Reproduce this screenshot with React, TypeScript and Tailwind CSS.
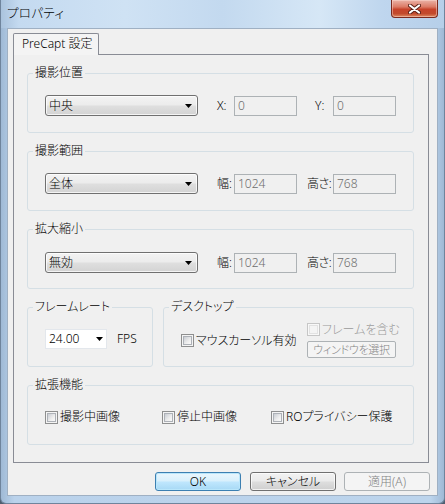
import React from "react";

function Arrow() {
  return (
    <svg width="7" height="4" viewBox="0 0 7 4" className="shrink-0">
      <path d="M0 0H7L3.5 4Z" fill="#000" />
    </svg>
  );
}

function Dropdown({ value }: { value: string }) {
  return (
    <div className="flex h-[21px] w-[153px] shrink-0 items-center justify-between rounded-[3px] border border-[#707070] bg-[linear-gradient(#f3f3f3,#ececec_45%,#dedede_55%,#d3d3d3)] pl-[3px] pr-[5px] shadow-[inset_0_0_0_1px_rgba(255,255,255,0.75)]">
      <span>{value}</span>
      <Arrow />
    </div>
  );
}

function Field({ value }: { value: string }) {
  return (
    <div className="flex h-[20px] w-[63px] shrink-0 items-center border border-[#adb2b5] bg-[#f0f0f0] pl-[3px] text-[#6d6d6d]">
      {value}
    </div>
  );
}

function Label({ text, className }: { text: string; className: string }) {
  return <span className={"shrink-0 whitespace-nowrap " + className}>{text}</span>;
}

function Check({ disabled }: { disabled?: boolean }) {
  return (
    <span
      className={
        disabled
          ? "flex h-[13px] w-[13px] shrink-0 items-center justify-center border border-[#c6c6c6] bg-[#f8f8f8]"
          : "flex h-[13px] w-[13px] shrink-0 items-center justify-center border border-[#8e8f8f] bg-[#f4f4f4]"
      }
    >
      <span
        className={
          disabled
            ? "h-[9px] w-[9px] border border-[#e2e2e2] bg-[#f4f4f4]"
            : "h-[9px] w-[9px] border border-[#adb1b7] bg-[linear-gradient(135deg,#c9cdd3,#eeeeee_60%,#fafafa)]"
        }
      />
    </span>
  );
}

function CheckItem({ text, disabled, className }: { text: string; disabled?: boolean; className?: string }) {
  return (
    <div className={"flex items-center " + (className ?? "")}>
      <Check disabled={disabled} />
      <span className={disabled ? "ml-[2px] whitespace-nowrap text-[#9a9a9a]" : "ml-[2px] whitespace-nowrap"}>{text}</span>
    </div>
  );
}

function Group({ title, className, children }: { title: string; className?: string; children: React.ReactNode }) {
  return (
    <fieldset className={"shrink-0 rounded-[3px] border border-[#d5dfe5] " + (className ?? "")}>
      <legend className="ml-[5px] px-[2px] leading-[16px]">{title}</legend>
      {children}
    </fieldset>
  );
}

function Button({ text, variant }: { text: string; variant: "default" | "normal" | "disabled" }) {
  const cls =
    variant === "default"
      ? "border-[#3c7fb1] bg-[linear-gradient(#eaf6fd,#d9f0fc_45%,#bee6fd_55%,#a7d9f5)] shadow-[inset_0_0_0_1px_#b9e6fb]"
      : variant === "normal"
      ? "border-[#707070] bg-[linear-gradient(#f2f2f2,#ebebeb_45%,#dddddd_55%,#cfcfcf)] shadow-[inset_0_0_0_1px_rgba(255,255,255,0.7)]"
      : "border-[#adb2b5] bg-[#f4f4f4] text-[#838383]";
  return (
    <div className={"flex h-[19px] w-[86px] items-center justify-center rounded-[3px] border " + cls}>
      {text}
    </div>
  );
}

export default function App() {
  return (
    <div className="h-[504px] w-[445px] bg-[#4e5e70]">
      <div className="flex h-full w-full flex-col rounded-b-[6px] border-x border-b border-[#6f849c] bg-[linear-gradient(90deg,#9fb9d5,#bad2eb_3%,#bcd4ec_97%,#9fb9d5)] font-['Noto_Sans','Noto_Sans_CJK_JP',sans-serif] text-[12px] font-light leading-[16px] text-black [font-feature-settings:'palt']">
        {/* title bar */}
        <div className="flex h-[28px] shrink-0 items-start justify-between bg-[linear-gradient(90deg,#aac3dd,#c4daf0_4%,#cfe2f4_28%,#c3d9ef_50%,#d6e7f6_72%,#bfd6ee_86%,#b6cfe9)] px-[6px]">
          <span className="mt-[6px] text-[12.5px] tracking-[0.3px]">プロパティ</span>
          <div className="flex h-[18px] w-[47px] items-center justify-center rounded-b-[4px] border border-t-0 border-[#7b2a1e] bg-[linear-gradient(#ebb3a7,#dc7b66_40%,#c7432a_55%,#c24a2c_80%,#de8a62)] shadow-[inset_0_0_0_1px_rgba(255,225,215,0.45)]">
            <svg width="13" height="10" viewBox="0 0 13 10">
              <path d="M2 1.5L11 8.5M11 1.5L2 8.5" stroke="#5a2016" strokeWidth="4" strokeLinecap="round" />
              <path d="M2 1.5L11 8.5M11 1.5L2 8.5" stroke="#ffffff" strokeWidth="2.2" strokeLinecap="round" />
            </svg>
          </div>
        </div>

        {/* client area */}
        <div className="flex flex-1 flex-col px-[6px] pb-[7px]">
          <div className="flex flex-1 flex-col border border-[#9fb0c3] bg-[#f0f0f0]">
            {/* tab strip */}
            <div className="ml-[5px] mt-[4px] flex">
              <div className="relative z-10 -mb-px h-[22px] w-[86px] rounded-t-[2px] border border-b-0 border-[#898c95] bg-[#f4f4f4] pl-[8px] pt-[2px] whitespace-nowrap">
                PreCapt 設定
              </div>
            </div>

            {/* tab page */}
            <div className="ml-[5px] flex h-[409px] w-[416px] flex-col gap-[10px] border border-[#898c95] bg-[#f0f0f0] pl-[13px] pr-[14px] pt-[10px]">
              <Group title="撮影位置">
                <div className="flex h-[51px] items-start pl-[17px] pt-[14px]">
                  <div className="flex h-[21px] items-center">
                    <Dropdown value="中央" />
                    <Label text="X:" className="ml-[19px] w-[17px]" />
                    <Field value="0" />
                    <Label text="Y:" className="ml-[18px] w-[18px]" />
                    <Field value="0" />
                  </div>
                </div>
              </Group>

              <Group title="撮影範囲">
                <div className="flex h-[51px] items-start pl-[17px] pt-[14px]">
                  <div className="flex h-[21px] items-center">
                    <Dropdown value="全体" />
                    <Label text="幅:" className="ml-[19px] w-[17px]" />
                    <Field value="1024" />
                    <Label text="高さ:" className="ml-[10px] w-[26px] tracking-[-0.5px]" />
                    <Field value="768" />
                  </div>
                </div>
              </Group>

              <Group title="拡大縮小">
                <div className="flex h-[51px] items-start pl-[17px] pt-[15px]">
                  <div className="flex h-[21px] items-center">
                    <Dropdown value="無効" />
                    <Label text="幅:" className="ml-[19px] w-[17px]" />
                    <Field value="1024" />
                    <Label text="高さ:" className="ml-[10px] w-[26px] tracking-[-0.5px]" />
                    <Field value="768" />
                  </div>
                </div>
              </Group>

              <div className="flex gap-[10px]">
                <Group title="フレームレート" className="w-[126px]">
                  <div className="flex h-[51px] items-start pl-[17px] pt-[14px]">
                    <div className="flex h-[20px] items-center">
                      <div className="flex h-[20px] w-[62px] items-center justify-between border border-[#e3e7ec] bg-white pl-[3px] pr-[3px]">
                        <span>24.00</span>
                        <Arrow />
                      </div>
                      <span className="ml-[10px]">FPS</span>
                    </div>
                  </div>
                </Group>

                <Group title="デスクトップ" className="flex-1">
                  <div className="flex h-[51px] items-start pl-[17px] pt-[8px]">
                    <div className="flex items-center">
                      <CheckItem text="マウスカーソル有効" className="w-[126px]" />
                      <div className="flex flex-col gap-[5px]">
                        <div className="flex h-[13px] items-center">
                          <CheckItem text="フレームを含む" disabled />
                        </div>
                        <div className="flex h-[17px] w-[89px] items-center justify-center whitespace-nowrap rounded-[2px] border border-[#adb2b5] bg-[#f4f4f4] text-[11px] tracking-[-0.3px] text-[#838383]">
                          ウィンドウを選択
                        </div>
                      </div>
                    </div>
                  </div>
                </Group>
              </div>

              <Group title="拡張機能">
                <div className="flex h-[51px] items-start pl-[17px] pt-[16px]">
                  <div className="flex h-[16px] items-center">
                    <CheckItem text="撮影中画像" className="w-[117px]" />
                    <CheckItem text="停止中画像" className="w-[109px]" />
                    <CheckItem text="ROプライバシー保護" />
                  </div>
                </div>
              </Group>
            </div>

            {/* dialog buttons */}
            <div className="mt-[9px] flex justify-end gap-[9px] pr-[7px]">
              <Button text="OK" variant="default" />
              <div className="flex gap-[8px]">
                <Button text="キャンセル" variant="normal" />
                <Button text="適用(A)" variant="disabled" />
              </div>
            </div>
          </div>
        </div>
      </div>
    </div>
  );
}
